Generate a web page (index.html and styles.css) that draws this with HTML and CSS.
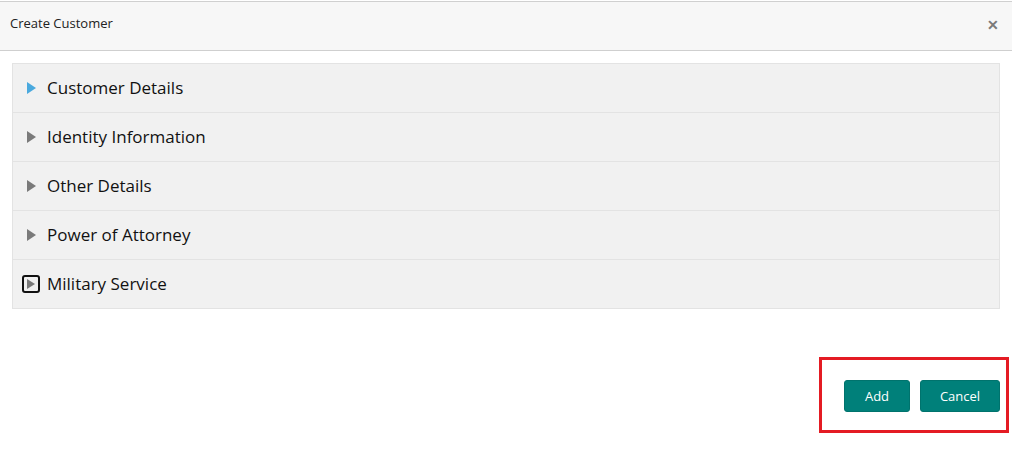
FILE: index.html
```html
<!DOCTYPE html>
<html lang="en">
<head>
  <meta charset="UTF-8" />
  <title>Create Customer</title>
  <link rel="stylesheet" href="styles.css">
</head>
<body>

<div class="dialog">
  <header>
    <h3>Create Customer</h3>
    <span class="close">&#x2715;</span>
  </header>

  <div class="content">
    <div class="accordion">
      <div class="row"><span class="arrow active"></span>Customer Details</div>
      <div class="row"><span class="arrow"></span>Identity Information</div>
      <div class="row"><span class="arrow"></span>Other Details</div>
      <div class="row"><span class="arrow"></span>Power of Attorney</div>
      <div class="row"><span class="arrow boxed"></span>Military Service</div>
    </div>
  </div>

  <footer>
    <div class="highlight">
      <button class="btn add">Add</button>
      <button class="btn cancel">Cancel</button>
    </div>
  </footer>
</div>

</body>
</html>
```

FILE: styles.css
```css
body {
  margin: 0;
  font-family: "Open Sans", "Noto Sans", Arial, sans-serif;
  background: white;
  color: #111;
}
.dialog {
  width: 1012px;
  border-top: 1px solid #d0d0d0;
  margin-top: 1px;
}
header {
  background: #f7f7f7;
  border-bottom: 1px solid #cfcfcf;
  height: 48px;
  display: flex;
  justify-content: space-between;
  padding: 0 13px 0 10px;
}
header h3 {
  margin: 0;
  padding-top: 12px;
  font-size: 13px;
  font-weight: normal;
  color: #222;
}
.close {
  padding-top: 13px;
  font-size: 14px;
  font-weight: bold;
  color: #7a7a7a;
}
.content {
  padding: 12px 12px 0 12px;
}
.accordion {
  width: 986px;
  border: 1px solid #e3e3e3;
  background: #f1f1f1;
}
.row {
  display: flex;
  align-items: center;
  padding-left: 9px;
  padding-bottom: 1px;
  box-sizing: border-box;
  height: 49px;
  font-size: 17px;
  color: #111;
  border-top: 1px solid #e3e3e3;
}
.row:first-child {
  border-top: none;
  height: 48px;
}
.arrow {
  width: 0;
  height: 0;
  border-top: 6px solid transparent;
  border-bottom: 6px solid transparent;
  border-left: 9px solid #7a7a7a;
  margin: 0 11px 0 5px;
}
.arrow.active {
  border-left-color: #4aa9de;
}
.arrow.boxed {
  box-sizing: border-box;
  border: 2px solid #111;
  border-radius: 3px;
  margin: 0 7px 0 0;
  padding: 2px 0 0 3px;
  width: 18px;
  height: 18px;
}
.arrow.boxed::after {
  content: "";
  display: block;
  border-top: 5px solid transparent;
  border-bottom: 5px solid transparent;
  border-left: 8px solid #7a7a7a;
}
footer {
  display: flex;
  justify-content: flex-end;
  padding-top: 48px;
  padding-right: 3px;
}
.highlight {
  border: 3px solid #e41b23;
  padding: 20px 6px 18px 22px;
  display: flex;
  gap: 10px;
  width: 156px;
  justify-content: flex-end;
}
.btn {
  background: #00807a;
  color: white;
  border: 1px solid #00736d;
  border-radius: 3px;
  height: 32px;
  font-family: "Open Sans", "Noto Sans", Arial, sans-serif;
  font-size: 13px;
  cursor: pointer;
}
.add { width: 66px; }
.cancel { width: 80px; }
```
